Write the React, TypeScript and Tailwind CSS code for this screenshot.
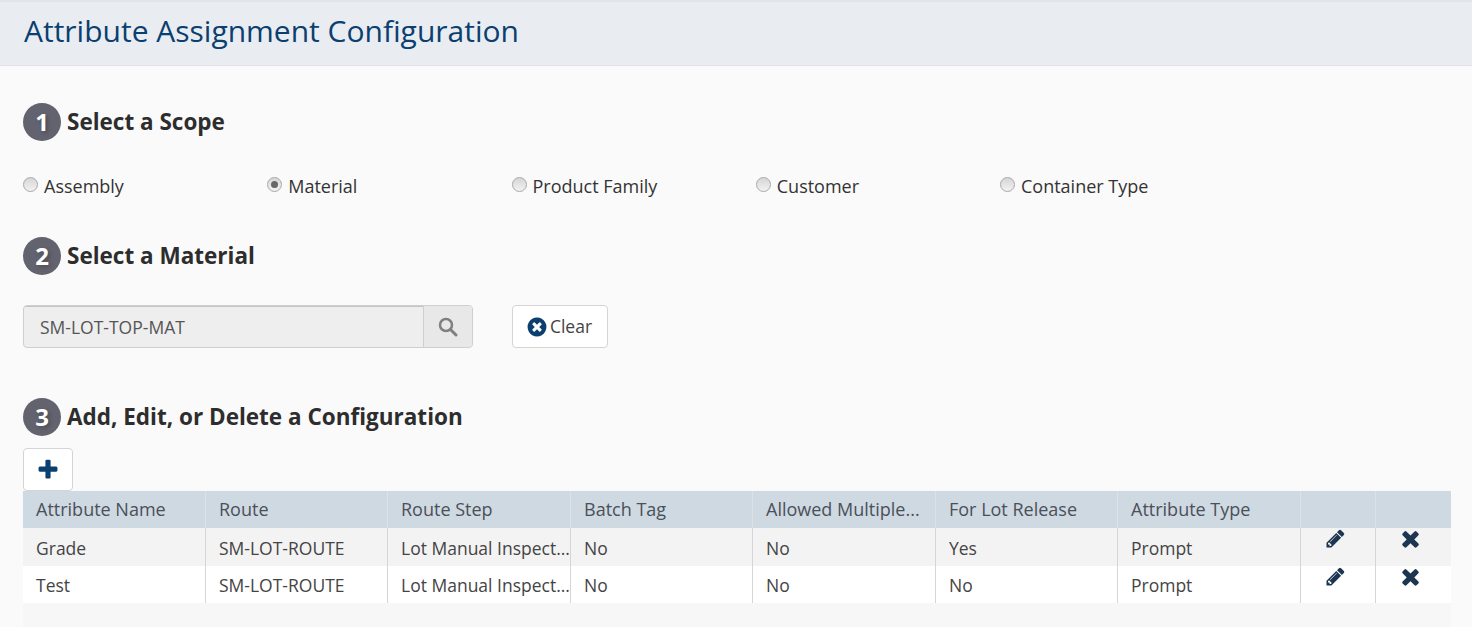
import type { ReactNode } from "react";

const FA = {
  pencil:
    "M491 1536l91-91-235-235-91 91v107h128v128h107zm523-928q0-22-22-22-10 0-17 7l-542 542q-7 7-7 17 0 22 22 22 10 0 17-7l542-542q7-7 7-17zm-54-192l416 416-832 832h-416v-416zm683 96q0 53-37 90l-166 166-416-416 166-165q36-38 90-38 53 0 91 38l235 234q37 39 37 91z",
  times:
    "M1490 1322q0 40-28 68l-136 136q-28 28-68 28t-68-28l-294-294-294 294q-28 28-68 28t-68-28l-136-136q-28-28-28-68t28-68l294-294-294-294q-28-28-28-68t28-68l136-136q28-28 68-28t68 28l294 294 294-294q28-28 68-28t68 28l136 136q28 28 28 68t-28 68l-294 294 294 294q28 28 28 68z",
  plus:
    "M1600 736v192q0 40-28 68t-68 28h-416v416q0 40-28 68t-68 28h-192q-40 0-68-28t-28-68v-416h-416q-40 0-68-28t-28-68v-192q0-40 28-68t68-28h416v-416q0-40 28-68t68-28h192q40 0 68 28t28 68v416h416q40 0 68 28t28 68z",
  timesCircle:
    "M1277 1122q0-26-19-45l-181-181 181-181q19-19 19-45 0-27-19-46l-90-90q-19-19-46-19-26 0-45 19l-181 181-181-181q-19-19-45-19-27 0-46 19l-90 90q-19 19-19 46 0 26 19 45l181 181-181 181q-19 19-19 45 0 27 19 46l90 90q19 19 46 19 26 0 45-19l181-181 181 181q19 19 45 19 27 0 46-19l90-90q19-19 19-46zm387-226q0 209-103 385.5t-279.5 279.5-385.5 103-385.5-103-279.5-279.5-103-385.5 103-385.5 279.5-279.5 385.5-103 385.5 103 279.5 279.5 103 385.5z",
};

const Icon = ({ d, className }: { d: string; className: string }) => (
  <svg viewBox="0 0 1792 1792" fill="currentColor" className={className}>
    <path d={d} />
  </svg>
);

const StepHeading = ({ step, children }: { step: number; children: ReactNode }) => (
  <div className="flex items-center gap-[6px]">
    <span className="flex h-[38px] w-[38px] items-center justify-center rounded-full bg-[#63636f] text-[24px] font-bold text-white [text-shadow:2px_2px_4px_rgba(0,0,0,0.25)]">
      {step}
    </span>
    <h2 className="text-[22.5px] leading-[38px] font-bold text-[#2d2d2d]">{children}</h2>
  </div>
);

const scopes = ["Assembly", "Material", "Product Family", "Customer", "Container Type"];

const Radio = ({ label, checked }: { label: string; checked?: boolean }) => (
  <label className="flex w-[244.25px] items-center gap-[6px] text-[18px] leading-[24px] font-medium text-[#333]">
    <span className="flex h-[15px] w-[15px] -translate-y-[2px] items-center justify-center rounded-full border border-[#a8a8a8] bg-gradient-to-b from-[#d6d6d6] to-[#f2f2f2]">
      {checked && <span className="h-[7px] w-[7px] rounded-full bg-[#666]" />}
    </span>
    {label}
  </label>
);

const columns = [
  "Attribute Name",
  "Route",
  "Route Step",
  "Batch Tag",
  "Allowed Multiple...",
  "For Lot Release",
  "Attribute Type",
];

const rows = [
  ["Grade", "SM-LOT-ROUTE", "Lot Manual Inspect...", "No", "No", "Yes", "Prompt"],
  ["Test", "SM-LOT-ROUTE", "Lot Manual Inspect...", "No", "No", "No", "Prompt"],
];

const GRID = "grid grid-cols-[182px_182px_183px_182px_183px_182px_183px_75px_76px]";

export default function App() {
  return (
    <div className="h-[627px] overflow-hidden bg-[#fafafa] font-['Open_Sans',sans-serif]">
      <header className="h-[66px] border-t-2 border-b border-t-[#e2e5e9] border-b-[#dfe3e8] bg-[#e9edf2] pl-[24px]">
        <h1 className="text-[30px] leading-[57px] text-[#0b3f6f]">Attribute Assignment Configuration</h1>
      </header>

      <main className="pr-[21px] pl-[23px]">
        <section className="pt-[37px]">
          <StepHeading step={1}>Select a Scope</StepHeading>
          <div className="mt-[33px] flex">
            {scopes.map((s) => (
              <Radio key={s} label={s} checked={s === "Material"} />
            ))}
          </div>
        </section>

        <section className="pt-[39px]">
          <StepHeading step={2}>Select a Material</StepHeading>
          <div className="mt-[30px] flex items-center">
            <div className="flex h-[43px] w-[450px] overflow-hidden rounded-[4px] border border-[#cfcfcf] bg-[#eeeeee]">
              <div className="flex flex-1 items-center border-t border-t-[#c4c4c4] pl-4 text-[17.5px] text-[#555]">
                SM-LOT-TOP-MAT
              </div>
              <div className="flex w-[49px] items-center justify-center border-l border-[#cfcfcf] bg-[#e8e8e8] text-[#808080]">
                <svg viewBox="0 0 20 20" className="h-[20px] w-[20px]" fill="none" stroke="currentColor">
                  <circle cx="8" cy="8" r="6" strokeWidth="2.5" />
                  <path d="M12.5 12.5L18 18" strokeWidth="3" strokeLinecap="round" />
                </svg>
              </div>
            </div>
            <button className="ml-[39px] flex h-[43px] w-[96px] items-center justify-center gap-[2px] rounded-[4px] border border-[#d4d4d4] bg-white pr-[2px] text-[17.5px] text-[#444]">
              <Icon d={FA.timesCircle} className="h-[22px] w-[22px] text-[#0b3f6f]" />
              Clear
            </button>
          </div>
        </section>

        <section className="pt-[50px]">
          <StepHeading step={3}>Add, Edit, or Delete a Configuration</StepHeading>
          <button className="mt-[12px] flex h-[43px] w-[50px] items-center justify-center rounded-[4px] border border-[#d4d4d4] bg-white text-[#0b3f6f]">
            <Icon d={FA.plus} className="h-[24px] w-[24px]" />
          </button>

          <div className="bg-[#f7f7f7] pb-[30px] text-[17.5px] text-[#444]">
            <div className={`${GRID} h-[37px] bg-[#cfd9e2] text-[18px] font-medium text-[#4a5059]`}>
              {[...columns, "", ""].map((c, i) => (
                <div key={i} className="flex items-center border-l border-[#dbe2e9] pl-[13px] first:border-l-0">
                  {c}
                </div>
              ))}
            </div>
            {rows.map((row, i) => (
              <div
                key={row[0]}
                className={`${GRID} ${i === 0 ? "h-[38px] bg-[#f3f3f3]" : "h-[37px] bg-white"}`}
              >
                {row.map((cell, j) => (
                  <div key={j} className="flex items-center border-l border-[#d5d5d5] pt-[2px] pl-[13px] whitespace-nowrap first:border-l-0">
                    {cell}
                  </div>
                ))}
                <div className="flex justify-center border-l border-[#d5d5d5] pr-[5px] text-[#1c3550]">
                  <Icon d={FA.pencil} className="h-[21px] w-[21px]" />
                </div>
                <div className="flex justify-center border-l border-[#d5d5d5] pr-[7px] text-[#1c3550]">
                  <Icon d={FA.times} className="-mt-[2px] h-[25px] w-[25px]" />
                </div>
              </div>
            ))}
          </div>
        </section>
      </main>
    </div>
  );
}
